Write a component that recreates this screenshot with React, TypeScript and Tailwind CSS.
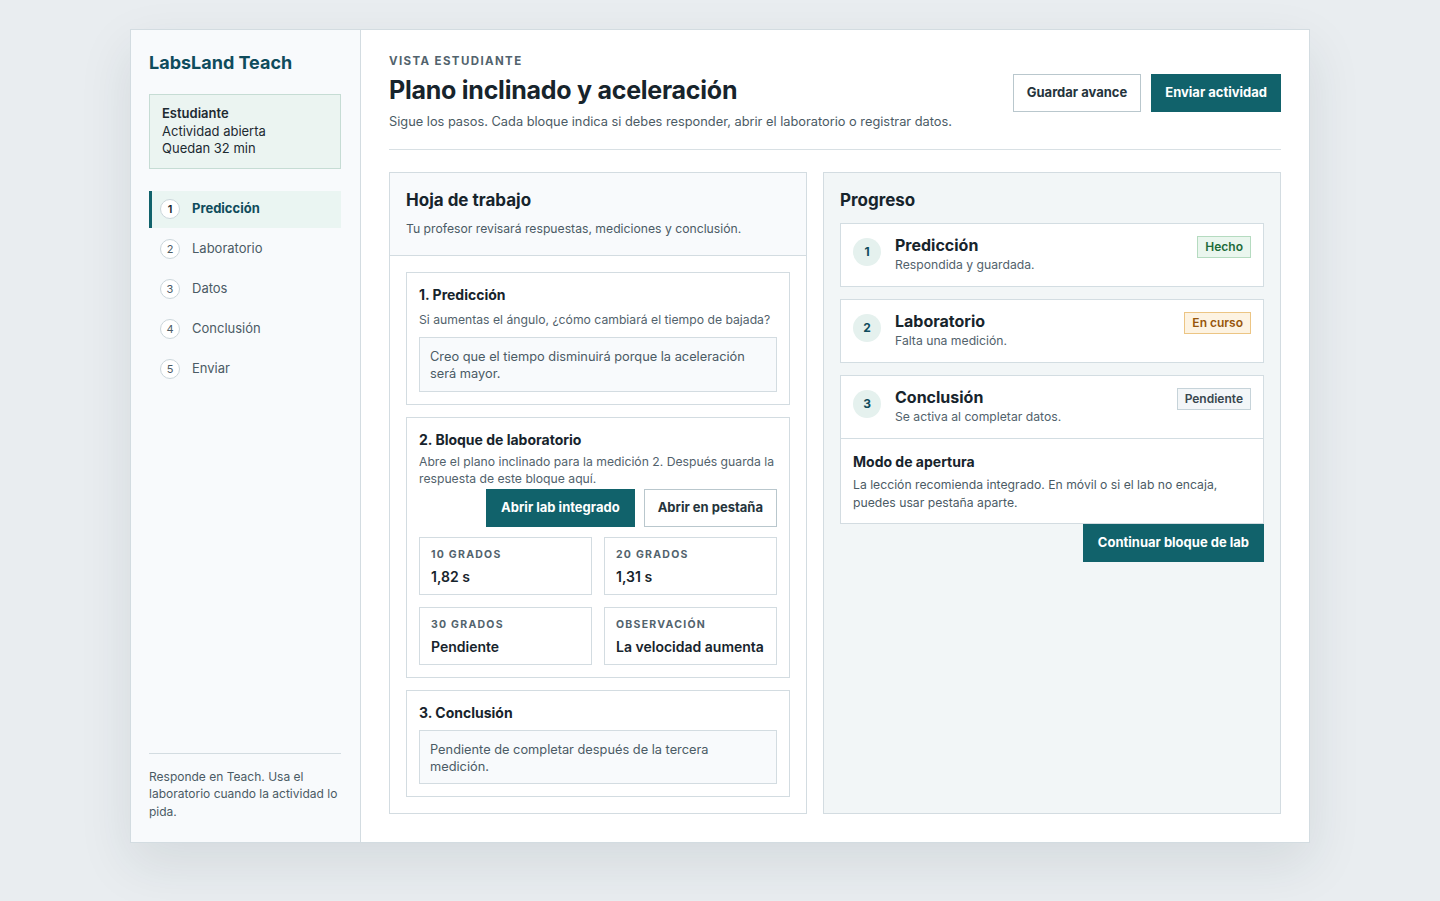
import React from "react";

const steps = [
  { n: 1, label: "Predicción", active: true },
  { n: 2, label: "Laboratorio" },
  { n: 3, label: "Datos" },
  { n: 4, label: "Conclusión" },
  { n: 5, label: "Enviar" },
];

const measures = [
  { label: "10 grados", value: "1,82 s" },
  { label: "20 grados", value: "1,31 s" },
  { label: "30 grados", value: "Pendiente" },
  { label: "Observación", value: "La velocidad aumenta" },
];

function Badge({ tone, children }: { tone: "done" | "doing" | "todo"; children: React.ReactNode }) {
  const cls =
    tone === "done"
      ? "bg-[#eaf6ee] border-[#b5dbc0] text-[#1d6b3a]"
      : tone === "doing"
      ? "bg-[#fdf3e2] border-[#ecc584] text-[#97560c]"
      : "bg-[#f3f6f8] border-[#c6d3d9] text-[#38464e]";
  return <span className={`border px-[7px] py-[3px] text-[12px] font-semibold leading-[14px] ${cls}`}>{children}</span>;
}

function ProgressItem({ n, title, sub, badge, tone }: { n: number; title: string; sub: string; badge: string; tone: "done" | "doing" | "todo" }) {
  return (
    <div className="flex h-[64px] items-start gap-[14px] border border-[#d3dde2] bg-white px-[12px] pt-[12px]">
      <div className="mt-[1px] flex h-[28px] w-[28px] shrink-0 translate-y-[1px] items-center justify-center rounded-full bg-[#e5f1ee] text-[12px] font-bold text-[#0f4c5c]">{n}</div>
      <div className="-mt-[2px] flex-1">
        <div className="text-[16px] font-bold leading-[22px] text-[#17242c]">{title}</div>
        <div className="text-[12.2px] leading-[18px] text-[#52626c]">{sub}</div>
      </div>
      <Badge tone={tone}>{badge}</Badge>
    </div>
  );
}

export default function App() {
  return (
    <div className="min-h-[901px] bg-[#e9edf0] pt-[29px] font-['Inter',sans-serif] text-[#17242c]">
      <div className="mx-auto flex h-[814px] w-[1180px] border border-[#d3dce1] bg-white shadow-[0_20px_50px_rgba(30,50,60,0.10)]">
        {/* Sidebar */}
        <aside className="flex w-[230px] shrink-0 flex-col border-r border-[#d3dce1] bg-[#f8fafc] pl-[18px] pr-[19px] pb-[22px] pt-[21px]">
          <div className="text-[18px] font-bold leading-[24px] text-[#0f4c5c]">LabsLand Teach</div>
          <div className="mt-[19px] border border-[#c6dcd4] bg-[#ebf4f1] px-[12px] py-[10px] text-[13px] leading-[17.5px] text-[#1d2a31]">
            <div className="font-semibold">Estudiante</div>
            <div>Actividad abierta</div>
            <div>Quedan 32 min</div>
          </div>
          <nav className="mt-[22px] flex flex-col gap-[3px]">
            {steps.map((s) => (
              <div
                key={s.n}
                className={`flex h-[37px] items-center gap-[12px] text-[13px] ${
                  s.active ? "border-l-[3px] border-[#11626b] bg-[#eaf5f2] pl-[8px] font-bold text-[#0f4c5c]" : "pl-[11px] text-[#4b5b65]"
                }`}
              >
                <span className={`flex h-[20px] w-[20px] items-center justify-center rounded-full border border-[#cbd6db] bg-white text-[11px] ${s.active ? "font-semibold text-[#17242c]" : "text-[#4b5b65]"}`}>
                  {s.n}
                </span>
                {s.label}
              </div>
            ))}
          </nav>
          <div className="mt-auto border-t border-[#d3dce1] pt-[14px] text-[12px] leading-[17.5px] text-[#4b5b65]">
            Responde en Teach. Usa el laboratorio cuando la actividad lo pida.
          </div>
        </aside>

        {/* Main */}
        <main className="flex flex-1 flex-col px-[28px] pt-[24px] pb-[28px]">
          <header className="flex items-start justify-between border-b border-[#d8e0e4] pb-[18px]">
            <div>
              <div className="text-[11.5px] font-bold uppercase leading-[14px] tracking-[0.12em] text-[#52636d]">Vista estudiante</div>
              <h1 className="mt-[7px] text-[25px] font-bold leading-[30px] tracking-[-0.01em] text-[#17242c]">Plano inclinado y aceleración</h1>
              <p className="mt-[8px] text-[12.8px] leading-[18px] text-[#4b5b65]">
                Sigue los pasos. Cada bloque indica si debes responder, abrir el laboratorio o registrar datos.
              </p>
            </div>
            <div className="mt-[20px] flex gap-[10px]">
              <button className="h-[38px] border border-[#b9c7cd] bg-white px-[13px] text-[13px] font-bold text-[#25343c]">Guardar avance</button>
              <button className="h-[38px] bg-[#11626b] px-[14px] text-[13px] font-bold text-white">Enviar actividad</button>
            </div>
          </header>

          <div className="mt-[22px] flex flex-1 gap-[16px]">
            {/* Worksheet */}
            <section className="flex w-[418px] shrink-0 flex-col border border-[#d3dce1] bg-white">
              <div className="border-b border-[#d3dce1] bg-[#f8fafc] px-[16px] pt-[15px] pb-[17px]">
                <h2 className="text-[17px] font-bold leading-[24px] text-[#17242c]">Hoja de trabajo</h2>
                <p className="mt-[8px] text-[12.2px] leading-[18px] text-[#4b5b65]">Tu profesor revisará respuestas, mediciones y conclusión.</p>
              </div>
              <div className="flex flex-col gap-[12px] px-[16px] pt-[16px]">
                <div className="border border-[#d3dce1] px-[12px] pt-[12px] pb-[12px]">
                  <h3 className="text-[14px] font-bold leading-[20px]">1. Predicción</h3>
                  <p className="mt-[6px] text-[12.2px] leading-[18px] text-[#52626c]">Si aumentas el ángulo, ¿cómo cambiará el tiempo de bajada?</p>
                  <div className="mt-[8px] border border-[#d3dce1] bg-[#f8fafc] px-[10px] pt-[10px] pb-[9px] text-[12.8px] leading-[17px] text-[#4b5b65]">
                    Creo que el tiempo disminuirá porque la aceleración será mayor.
                  </div>
                </div>

                <div className="border border-[#d3dce1] px-[12px] py-[12px]">
                  <h3 className="text-[14px] font-bold leading-[20px]">2. Bloque de laboratorio</h3>
                  <p className="mt-[3px] text-[12.2px] leading-[17px] text-[#52626c]">
                    Abre el plano inclinado para la medición 2. Después guarda la respuesta de este bloque aquí.
                  </p>
                  <div className="mt-[2px] flex justify-end gap-[9px]">
                    <button className="h-[38px] bg-[#11626b] px-[15px] text-[13px] font-bold text-white">Abrir lab integrado</button>
                    <button className="h-[38px] border border-[#b9c7cd] bg-white px-[13px] text-[13px] font-bold text-[#25343c]">Abrir en pestaña</button>
                  </div>
                  <div className="mt-[10px] grid grid-cols-2 gap-x-[12px] gap-y-[12px]">
                    {measures.map((m) => (
                      <div key={m.label} className="h-[58px] border border-[#d3dce1] px-[11px] pt-[10px]">
                        <div className="text-[10.5px] font-bold uppercase leading-[14px] tracking-[0.12em] text-[#52636d]">{m.label}</div>
                        <div className="mt-[5px] whitespace-nowrap text-[14px] font-semibold leading-[20px] text-[#17242c]">{m.value}</div>
                      </div>
                    ))}
                  </div>
                </div>

                <div className="border border-[#d3dce1] px-[12px] py-[12px]">
                  <h3 className="text-[14px] font-bold leading-[20px]">3. Conclusión</h3>
                  <div className="mt-[7px] border border-[#d3dce1] bg-[#f8fafc] px-[10px] pt-[10px] pb-[8px] text-[12.8px] leading-[17px] text-[#4b5b65]">
                    Pendiente de completar después de la tercera medición.
                  </div>
                </div>
              </div>
            </section>

            {/* Progress */}
            <section className="flex flex-1 flex-col border border-[#d3dce1] bg-[#f2f6f7] px-[16px] pt-[15px]">
              <h2 className="text-[17px] font-bold leading-[24px] text-[#17242c]">Progreso</h2>
              <div className="mt-[11px] flex flex-col gap-[12px]">
                <ProgressItem n={1} title="Predicción" sub="Respondida y guardada." badge="Hecho" tone="done" />
                <ProgressItem n={2} title="Laboratorio" sub="Falta una medición." badge="En curso" tone="doing" />
                <div className="flex flex-col">
                  <ProgressItem n={3} title="Conclusión" sub="Se activa al completar datos." badge="Pendiente" tone="todo" />
                  <div className="border border-t-0 border-[#d3dce1] bg-white px-[12px] pt-[13px] pb-[12px]">
                    <h3 className="text-[14px] font-bold leading-[20px]">Modo de apertura</h3>
                    <p className="mt-[4px] text-[12.2px] leading-[17.5px] text-[#4b5b65]">
                      La lección recomienda integrado. En móvil o si el lab no encaja, puedes usar pestaña aparte.
                    </p>
                  </div>
                  <div className="flex justify-end">
                    <button className="h-[38px] bg-[#11626b] px-[15px] text-[13px] font-bold text-white">Continuar bloque de lab</button>
                  </div>
                </div>
              </div>
            </section>
          </div>
        </main>
      </div>
    </div>
  );
}
